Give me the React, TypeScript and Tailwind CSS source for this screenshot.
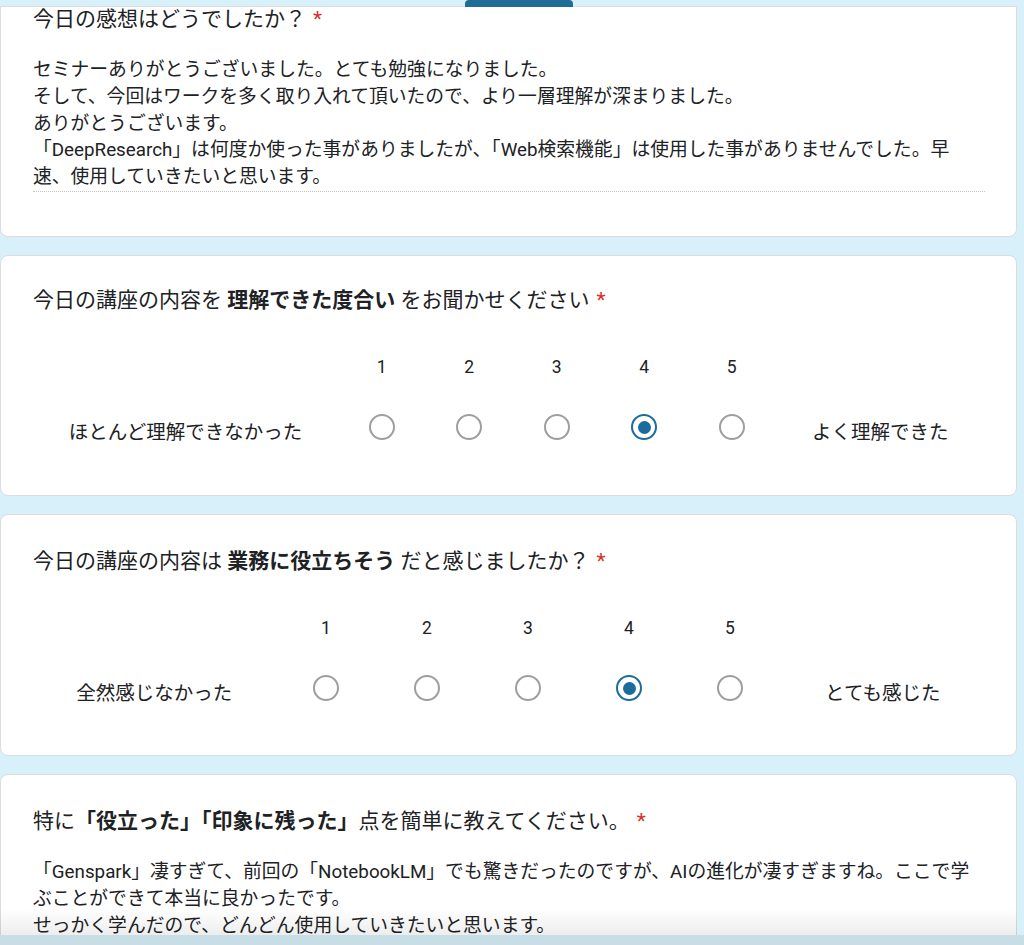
const FONT = "font-['Roboto','Noto_Sans_CJK_JP',sans-serif]"

type ScaleProps = {
  low: string
  high: string
  selected: number
  leftW: number
  colW: number
}

function Radio({ checked }: { checked: boolean }) {
  return (
    <div
      className={`flex h-[26px] w-[26px] items-center justify-center rounded-full border-[2.5px] ${
        checked ? 'border-[#1b6c9c]' : 'border-[#9e9e9e]'
      }`}
    >
      {checked && <div className="h-[13px] w-[13px] rounded-full bg-[#1b6c9c]" />}
    </div>
  )
}

function LinearScale({ low, high, selected, leftW, colW }: ScaleProps) {
  const nums = [1, 2, 3, 4, 5]
  return (
    <div className="mt-[40px]">
      <div className="flex h-[24px] items-center text-[17.5px] leading-[24px]">
        <div style={{ width: leftW }} className="shrink-0" />
        {nums.map((n) => (
          <div key={n} style={{ width: colW }} className="shrink-0 text-center">
            {n}
          </div>
        ))}
      </div>
      <div className="mt-[24px] flex h-[48px] items-center text-[19.5px]">
        <div style={{ width: leftW }} className="shrink-0 pt-[12px] text-center">
          {low}
        </div>
        {nums.map((n) => (
          <div key={n} style={{ width: colW }} className="flex shrink-0 justify-center">
            <Radio checked={n === selected} />
          </div>
        ))}
        <div className="flex-1 pt-[12px] text-center">{high}</div>
      </div>
    </div>
  )
}

function Req() {
  return <span className="ml-[7px] text-[#d93025]">*</span>
}

function Card({ className = '', children }: { className?: string; children: React.ReactNode }) {
  return (
    <div
      className={`w-[1017px] rounded-[8px] border border-[#dadce0] bg-white pl-[32px] pr-[31px] ${className}`}
    >
      {children}
    </div>
  )
}

function Answer({ lines }: { lines: string[] }) {
  return (
    <div className="border-b border-dotted border-[#c4c4c4] text-[18.8px] leading-[26.75px]">
      {lines.map((l, i) => (
        <div key={i} className="whitespace-nowrap">
          {l}
        </div>
      ))}
    </div>
  )
}

export default function App() {
  return (
    <div
      className={`relative h-[945px] w-[1024px] overflow-hidden bg-[#d8f0fa] text-[#202124] ${FONT}`}
    >
      <div className="absolute left-[465px] top-0 h-[7px] w-[108px] rounded-t-[4px] bg-[#1f6d97]" />

      <div className="flex flex-col gap-[18px] pt-[6px]">
        <Card className="h-[231px] rounded-t-none border-t">
          <div className="text-[21px] leading-[24px]">
            今日の感想はどうでしたか？
            <Req />
          </div>
          <div className="mt-[26px]">
            <Answer
              lines={[
                'セミナーありがとうございました。とても勉強になりました。',
                'そして、今回はワークを多く取り入れて頂いたので、より一層理解が深まりました。',
                'ありがとうございます。',
                '「DeepResearch」は何度か使った事がありましたが、「Web検索機能」は使用した事がありませんでした。早',
                '速、使用していきたいと思います。',
              ]}
            />
          </div>
        </Card>

        <Card className="h-[241px] pt-[29px]">
          <div className="text-[21px] leading-[30px]">
            今日の講座の内容を <span className="font-bold">理解できた度合い</span>{' '}
            をお聞かせください
            <Req />
          </div>
          <LinearScale
            low="ほとんど理解できなかった"
            high="よく理解できた"
            selected={4}
            leftW={305}
            colW={87.5}
          />
        </Card>

        <Card className="h-[242px] pt-[31px]">
          <div className="text-[21px] leading-[30px]">
            今日の講座の内容は <span className="font-bold">業務に役立ちそう</span>{' '}
            だと感じましたか？
            <Req />
          </div>
          <LinearScale
            low="全然感じなかった"
            high="とても感じた"
            selected={4}
            leftW={242.5}
            colW={101}
          />
        </Card>

        <Card className="h-[300px] pt-[31px]">
          <div className="text-[21px] leading-[30px]">
            特に<span className="font-bold">「役立った」「印象に残った」</span>
            点を簡単に教えてください。
            <Req />
          </div>
          <div className="mt-[23px]">
            <Answer
              lines={[
                '「Genspark」凄すぎて、前回の「NotebookLM」でも驚きだったのですが、AIの進化が凄すぎますね。ここで学',
                'ぶことができて本当に良かったです。',
                'せっかく学んだので、どんどん使用していきたいと思います。',
              ]}
            />
          </div>
        </Card>
      </div>

      <div className="absolute left-0 top-[908px] h-[27px] w-[1017px] bg-gradient-to-b from-black/0 to-black/[0.07]" />
      <div className="absolute bottom-0 left-0 h-[10px] w-full bg-[#c8dee6]" />
    </div>
  )
}
